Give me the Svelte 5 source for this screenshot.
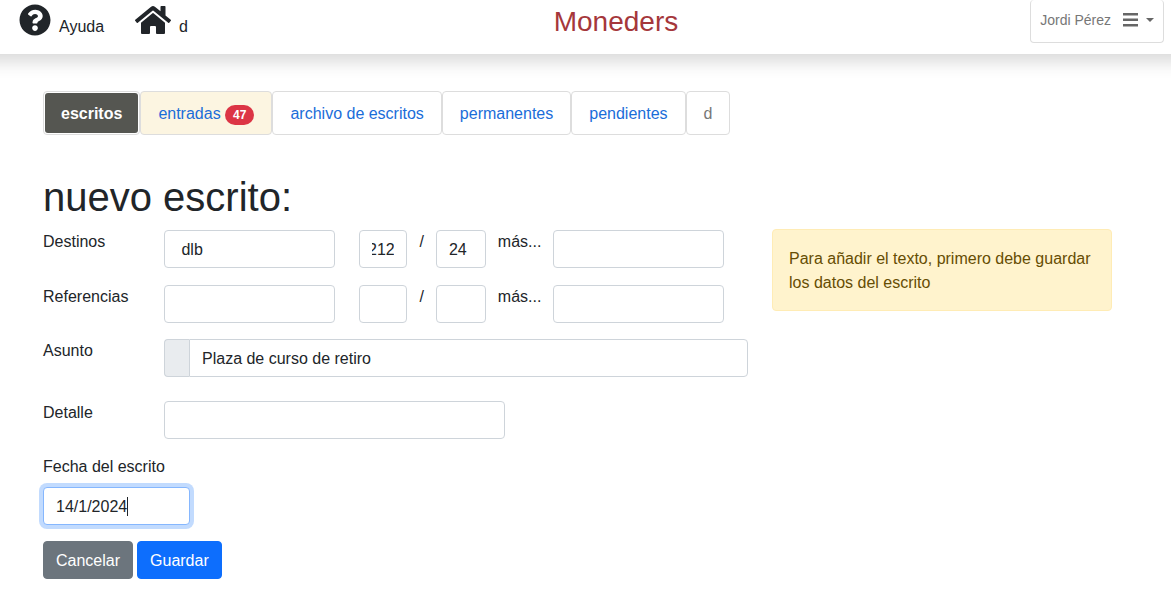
<script>
  import { onMount } from 'svelte';

  const tabs = [
    { label: 'escritos', kind: 'current' },
    { label: 'entradas', kind: 'notice', count: 47 },
    { label: 'archivo de escritos' },
    { label: 'permanentes' },
    { label: 'pendientes' },
    { label: 'd', kind: 'muted' }
  ];

  let rows = $state([
    { id: 'destinos', label: 'Destinos', office: ' dlb', number: ' 212', year: '24', more: '' },
    { id: 'referencias', label: 'Referencias', office: '', number: '', year: '', more: '' }
  ]);
  let subject = $state('Plaza de curso de retiro');
  let detail = $state('');
  let date = $state('14/1/2024');
  let dateInput;

  // Keeps the last digits of a long number in view.
  function showEnd(node) {
    node.scrollLeft = node.scrollWidth;
  }

  onMount(() => {
    dateInput.focus();
    dateInput.setSelectionRange(date.length, date.length);
  });
</script>

<header>
  <nav class="shortcuts" aria-label="Accesos">
    <a href="#ayuda">
      <svg width="32" height="32" viewBox="0 0 512 512" aria-hidden="true"><path d="M504 256c0 136.997-111.043 248-248 248S8 392.997 8 256C8 119.083 119.043 8 256 8s248 111.083 248 248zM262.655 90c-54.497 0-89.255 22.957-116.549 63.758-3.536 5.286-2.353 12.415 2.715 16.258l34.699 26.31c5.205 3.947 12.621 3.008 16.665-2.122 17.864-22.658 30.113-35.797 57.303-35.797 20.429 0 45.698 13.148 45.698 32.958 0 14.976-12.363 22.667-32.534 33.976C247.128 238.528 216 254.941 216 296v4c0 6.627 5.373 12 12 12h56c6.627 0 12-5.373 12-12v-1.333c0-28.462 83.186-29.647 83.186-106.667 0-58.002-60.165-102-116.531-102zM256 338c-25.365 0-46 20.635-46 46 0 25.364 20.635 46 46 46s46-20.636 46-46c0-25.365-20.635-46-46-46z"/></svg>
      <span>Ayuda</span>
    </a>
    <a href="#inicio">
      <svg width="36" height="32" viewBox="0 0 576 512" aria-hidden="true"><path d="M280.37 148.26L96 300.11V464a16 16 0 0 0 16 16l112.06-.29a16 16 0 0 0 15.92-16V368a16 16 0 0 1 16-16h64a16 16 0 0 1 16 16v95.64a16 16 0 0 0 16 16.05L464 480a16 16 0 0 0 16-16V300L295.67 148.26a12.19 12.19 0 0 0-15.3 0zM571.6 251.47L488 182.56V44.05a12 12 0 0 0-12-12h-56a12 12 0 0 0-12 12v72.61L318.47 43a48 48 0 0 0-61 0L4.34 251.47a12 12 0 0 0-1.6 16.9l25.5 31A12 12 0 0 0 45.15 301l235.22-193.74a12.19 12.19 0 0 1 15.3 0L530.9 301a12 12 0 0 0 16.9-1.6l25.5-31a12 12 0 0 0-1.7-16.93z"/></svg>
      <span>d</span>
    </a>
  </nav>
  <div class="brand">Moneders</div>
  <button type="button" class="user">
    <span>Jordi Pérez</span>
    <svg class="bars" width="15" height="14" viewBox="0 0 15 14" aria-hidden="true"><path d="M0 0h15v2.4H0zM0 5.5h15v2.4H0zM0 11h15v2.4H0z"/></svg>
    <svg width="8" height="4" viewBox="0 0 8 4" aria-hidden="true"><path d="M0 0h8L4 4z"/></svg>
  </button>
</header>

<main>
  <nav aria-label="Secciones">
    <ul class="tabs">
      {#each tabs as tab}
        <li class={tab.kind}>
          <a href="#{tab.label}">
            {tab.label}
            {#if tab.count}<span class="badge">{tab.count}</span>{/if}
          </a>
        </li>
      {/each}
    </ul>
  </nav>

  <h1>nuevo escrito:</h1>

  <div class="layout">
    <form onsubmit={(e) => e.preventDefault()}>
      <div class="refs-block">
        {#each rows as row}
          <div class="row refs">
            <label for={row.id}>{row.label}</label>
            <input id={row.id} type="text" bind:value={row.office} />
            <span></span>
            <input type="text" aria-label="{row.label}: número" bind:value={row.number} use:showEnd />
            <span class="sep">/</span>
            <input type="text" aria-label="{row.label}: año" bind:value={row.year} />
            <label class="sep" for="{row.id}-mas">más...</label>
            <input id="{row.id}-mas" type="text" bind:value={row.more} />
          </div>
        {/each}
      </div>
      <div class="row">
        <label for="asunto">Asunto</label>
        <div class="group">
          <span class="addon"></span>
          <input id="asunto" type="text" bind:value={subject} />
        </div>
      </div>
      <div class="row detail">
        <label for="detalle">Detalle</label>
        <input id="detalle" type="text" bind:value={detail} />
      </div>
      <div class="date">
        <label for="fecha">Fecha del escrito</label>
        <div class="caret-field">
          <input id="fecha" type="text" bind:value={date} bind:this={dateInput} />
          <span class="caret"></span>
        </div>
      </div>
      <div class="actions">
        <button type="button" class="cancel">Cancelar</button>
        <button type="submit" class="save">Guardar</button>
      </div>
    </form>
    <aside role="note">Para añadir el texto, primero debe guardar los datos del escrito</aside>
  </div>
</main>

<style>
  :global(body) {
    overflow-x: hidden;
    background: #fff;
    color: #212529;
    font: 16px/24px "Liberation Sans", Arial, sans-serif;
  }
  :global(*) { box-sizing: border-box; }
  input, button { font: inherit; }
  a { text-decoration: none; }
  svg { display: block; fill: currentColor; }

  /* Wider than the window, so that the shadow stays even up to both edges. */
  header {
    display: grid;
    grid-template-columns: 554fr auto 486fr;
    height: 54px;
    margin: 0 -24px;
    padding: 0 31px 0 24px;
    box-shadow: 0 8px 16px rgba(0, 0, 0, 0.15);
  }
  .shortcuts { display: flex; gap: 31px; padding: 4px 0 0 19px; }
  .shortcuts a { display: flex; gap: 8px; color: inherit; }
  .shortcuts span { padding-top: 11px; }
  .brand { color: #a5373b; font-size: 28px; line-height: 44px; }
  .user {
    display: flex;
    align-items: center;
    justify-self: end;
    height: 43px;
    padding: 0 9px 2px;
    border: 1px solid #ddd;
    border-top: 0;
    border-radius: 4px;
    background: #fff;
    color: #777;
    font-size: 14px;
    line-height: 20px;
  }
  .bars { margin: 0 8px 0 12px; }
  .user svg { color: #666; }

  main { padding: 37px 59px 16px 43px; }
  .tabs { display: flex; margin: 0; padding: 0; list-style: none; }
  .tabs li {
    padding: 1px;
    border: 1px solid #ddd;
    border-radius: 4px;
  }
  .tabs a {
    display: block;
    padding: 9px 16px 7px;
    border-radius: 3px;
    color: #1a6dd9;
  }
  .tabs .current a {
    background: #555651;
    color: #fff;
    font-weight: bold;
  }
  .tabs .notice { background: #fcf5e1; }
  .tabs .muted a { color: #777; }
  .badge {
    display: inline-block;
    padding: 4px 8px;
    border-radius: 10px;
    background: #dc3545;
    color: #fff;
    font-size: 12px;
    font-weight: bold;
    line-height: 12px;
  }

  h1 { margin: 38px 0 8px; font-size: 40px; font-weight: 500; line-height: 48px; }

  .layout {
    display: grid;
    grid-template-columns: 705fr 340fr;
    column-gap: 24px;
    align-items: start;
  }
  form { display: grid; row-gap: 16px; padding-top: 1px; }
  .row { display: grid; grid-template-columns: 121px minmax(0, 1fr); }
  .refs-block { display: grid; row-gap: 17px; }
  .refs {
    grid-template-columns:
      121px minmax(0, 171fr) 24px minmax(0, 49fr) auto
      minmax(0, 50fr) auto minmax(0, 171fr);
    padding-right: 24px;
  }
  .detail { grid-template-columns: 121px minmax(0, 341fr) 243fr; margin-top: 8px; }
  .sep { padding: 0 12px; }
  input {
    width: 100%;
    min-width: 0;
    height: 38px;
    padding: 7px 12px 5px;
    border: 1px solid #ced4da;
    border-radius: 4px;
    background: #fff;
    color: inherit;
  }
  input:focus {
    border-color: #86b7fe;
    outline: 0;
    box-shadow: 0 0 0 4px rgba(13, 110, 253, 0.25);
  }
  .group { display: flex; }
  .addon {
    flex: none;
    width: 25px;
    border: 1px solid #ced4da;
    border-right: 0;
    border-radius: 4px 0 0 4px;
    background: #e9ecef;
  }
  .group input { border-radius: 0 4px 4px 0; }
  .date { display: grid; grid-template-columns: 147px; row-gap: 8px; }
  .date label { white-space: nowrap; }
  .caret-field { position: relative; }
  .caret-field input { caret-color: transparent; }
  .caret {
    display: none;
    position: absolute;
    top: 10px;
    left: 84px;
    width: 1px;
    height: 19px;
    background: #212529;
  }
  input:focus + .caret { display: block; }
  .actions { display: flex; gap: 4px; }
  .actions button {
    padding: 7px 12px 5px;
    border: 1px solid;
    border-radius: 4px;
    color: #fff;
  }
  .actions .cancel { border-color: #6c757d; background: #6c757d; }
  .actions .save { border-color: #0d6efd; background: #0d6efd; }

  aside {
    padding: 17px 16px 15px;
    border: 1px solid #ffecb5;
    border-radius: 4px;
    background: #fff3cd;
    color: #664d03;
  }
</style>
